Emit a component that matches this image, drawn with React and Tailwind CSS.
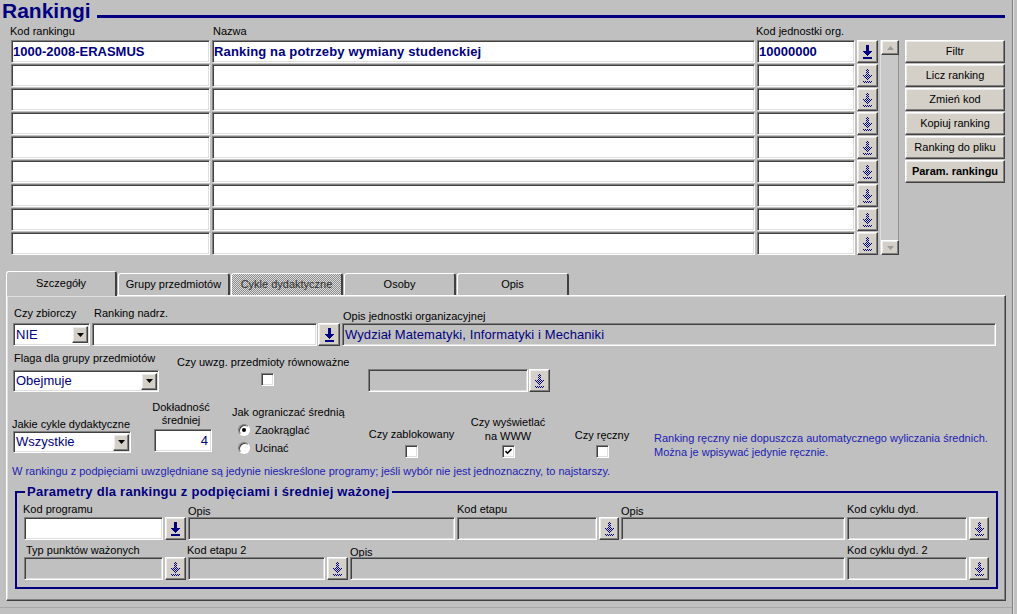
import React from "react";

const SUNKEN =
  "border border-t-[#808080] border-l-[#808080] border-b-white border-r-white shadow-[inset_1px_1px_0_#404040,inset_-1px_-1px_0_#dfdfdf]";
const RAISED =
  "bg-[#d4d0c8] border border-t-white border-l-white border-b-[#404040] border-r-[#404040] shadow-[inset_-1px_-1px_0_#808080,inset_1px_1px_0_#ececec]";

function Field({ className = "", white = false, children }) {
  return (
    <div
      className={`${SUNKEN} ${white ? "bg-white" : "bg-[#c0c0c0]"} h-[23px] flex items-center overflow-hidden whitespace-nowrap ${className}`}
    >
      {children}
    </div>
  );
}

function ArrowIcon({ enabled }) {
  const fill = enabled ? "#000080" : "url(#dith)";
  return (
    <svg width="9" height="14" viewBox="0 0 9 14" shapeRendering="crispEdges">
      <rect x="3" y="0" width="3" height="6" fill={fill} />
      <polygon points="0,6 9,6 4.5,11" fill={fill} />
      <rect x="0" y="12" width="9" height="2" fill={fill} />
    </svg>
  );
}

function LovBtn({ enabled = false, className = "" }) {
  return (
    <div className={`${RAISED} h-[23px] flex items-center justify-center shrink-0 ${className}`}>
      <ArrowIcon enabled={enabled} />
    </div>
  );
}

function Combo({ className = "", text }) {
  return (
    <div className={`${SUNKEN} bg-white flex items-center ${className}`}>
      <span className="flex-1 pl-[2px] text-[13px] text-[#000080] whitespace-nowrap">{text}</span>
      <div className={`${RAISED} w-[16px] h-[17px] mr-[1px] flex items-center justify-center`}>
        <svg width="7" height="4" viewBox="0 0 7 4">
          <polygon points="0,0 7,0 3.5,4" fill="#000" />
        </svg>
      </div>
    </div>
  );
}

function Check({ checked = false }) {
  return (
    <div className={`${SUNKEN} bg-white w-[13px] h-[13px] flex items-center justify-center`}>
      {checked && (
        <svg width="7" height="7" viewBox="0 0 7 7">
          <polyline points="0.5,3 2.5,5.2 6.5,1" fill="none" stroke="#000" strokeWidth="1.6" />
        </svg>
      )}
    </div>
  );
}

function Radio({ on = false }) {
  return (
    <div className="w-[12px] h-[12px] rounded-full bg-white border border-t-[#808080] border-l-[#808080] border-b-white border-r-white shadow-[inset_1px_1px_0_#404040] flex items-center justify-center">
      {on && <div className="w-[4px] h-[4px] rounded-full bg-black" />}
    </div>
  );
}

function Label({ className = "", children }) {
  return <div className={`leading-[14px] whitespace-nowrap ${className}`}>{children}</div>;
}

const rows = Array.from({ length: 9 }, (_, i) => i);
const sideButtons = ["Filtr", "Licz ranking", "Zmień kod", "Kopiuj ranking", "Ranking do pliku"];

export default function App() {
  return (
    <div className="w-[1017px] h-[614px] bg-[#c0c0c0] flex overflow-hidden font-['Liberation_Sans',Arial,sans-serif] text-[11px] text-black">
      <svg className="absolute w-0 h-0">
        <defs>
          <pattern id="dith" width="2" height="2" patternUnits="userSpaceOnUse">
            <rect x="0" y="0" width="1" height="1" fill="#000080" />
            <rect x="1" y="1" width="1" height="1" fill="#000080" />
          </pattern>
        </defs>
      </svg>

      <div className="w-[1012px] flex flex-col">
        {/* Title */}
        <div className="h-[24px] flex items-start pl-[2px]">
          <span className="text-[21px] leading-[22px] font-bold text-[#000080]">Rankingi</span>
          <div className="flex-1 h-[3px] bg-[#000080] mt-[15px] ml-[6px] mr-[7px]" />
        </div>

        {/* Table block */}
        <div className="flex pl-[11px]">
          <div className="flex flex-col">
            <div className="flex gap-[2px] h-[14px]">
              <Label className="w-[199px] ml-[-1px]">Kod rankingu</Label>
              <Label className="w-[543px] pl-[2px]">Nazwa</Label>
              <Label className="w-[98px]">Kod jednostki org.</Label>
            </div>
            <div className="flex flex-col gap-[1px] mt-[2px]">
              {rows.map((i) => (
                <div key={i} className="flex gap-[2px]">
                  <Field white className="w-[199px] pl-[1px] text-[13px] font-bold text-[#000080]">
                    {i === 0 ? "1000-2008-ERASMUS" : ""}
                  </Field>
                  <Field white className="w-[543px] pl-[1px] text-[13px] font-bold text-[#000080] tracking-[0.15px]">
                    {i === 0 ? "Ranking na potrzeby wymiany studenckiej" : ""}
                  </Field>
                  <Field white className="w-[98px] pl-[1px] text-[13px] font-bold text-[#000080]">
                    {i === 0 ? "10000000" : ""}
                  </Field>
                  <LovBtn enabled={i === 0} className="w-[21px]" />
                </div>
              ))}
            </div>
          </div>

          {/* scrollbar */}
          <div className="ml-[2px] mt-[16px] w-[19px] h-[215px] flex flex-col border-l border-[#dfdfdf] bg-[#c8c8c8]">
            <div className={`${RAISED} h-[15px] flex items-center justify-center`}>
              <svg width="7" height="4" viewBox="0 0 7 4">
                <polygon points="0,4 7,4 3.5,0" fill="#9a9a9a" />
              </svg>
            </div>
            <div className="flex-1 border-r border-[#909090]" />
            <div className={`${RAISED} h-[15px] flex items-center justify-center`}>
              <svg width="7" height="4" viewBox="0 0 7 4">
                <polygon points="0,0 7,0 3.5,4" fill="#9a9a9a" />
              </svg>
            </div>
          </div>

          {/* side buttons */}
          <div className="ml-[6px] mt-[16px] flex flex-col gap-[1px]">
            {sideButtons.map((b) => (
              <div key={b} className={`${RAISED} w-[100px] h-[23px] flex items-center justify-center`}>
                {b}
              </div>
            ))}
            <div className={`${RAISED} w-[100px] h-[23px] flex items-center justify-center font-bold`}>
              Param. rankingu
            </div>
          </div>
        </div>

        {/* Tabs */}
        <div className="mt-[16px] ml-[6px] h-[24px] flex items-end gap-[1px]">
          <div className="relative z-10 w-[111px] h-[25px] mb-[-1px] bg-[#c0c0c0] border-t border-l border-white border-r-2 border-r-[#404040] rounded-t-[3px] flex items-center justify-center pb-[2px]">
            Szczegóły
          </div>
          <div className="w-[112px] h-[22px] bg-[#c0c0c0] border-t border-l border-white border-r-2 border-r-[#404040] rounded-t-[3px] flex items-center justify-center">
            Grupy przedmiotów
          </div>
          <div className="w-[112px] h-[22px] bg-[repeating-conic-gradient(#8c8c8c_0%_25%,#dcdcdc_0%_50%)] bg-[length:2px_2px] border-t border-l border-white border-r-2 border-r-[#404040] rounded-t-[3px] flex items-center justify-center text-[#303030]">
            Cykle dydaktyczne
          </div>
          <div className="w-[112px] h-[22px] bg-[#c0c0c0] border-t border-l border-white border-r-2 border-r-[#404040] rounded-t-[3px] flex items-center justify-center">
            Osoby
          </div>
          <div className="w-[112px] h-[22px] bg-[#c0c0c0] border-t border-l border-white border-r-2 border-r-[#404040] rounded-t-[3px] flex items-center justify-center">
            Opis
          </div>
        </div>

        {/* Panel */}
        <div className="ml-[6px] w-[1000px] h-[306px] border border-t-white border-l-white border-b-[#404040] border-r-[#404040] shadow-[inset_-1px_-1px_0_#808080,inset_1px_1px_0_#dfdfdf] flex flex-col pl-[6px]">
          {/* Row 1 */}
          <div className="mt-[10px] flex items-end">
            <div className="flex flex-col">
              <Label className="pl-[1px] mb-[3px]">Czy zbiorczy</Label>
              <Combo className="w-[77px] h-[23px]" text="NIE" />
            </div>
            <div className="flex flex-col ml-[2px]">
              <Label className="pl-[2px] mb-[3px]">Ranking nadrz.</Label>
              <Field white className="w-[225px]" />
            </div>
            <LovBtn enabled className="w-[22px] ml-[1px]" />
            <div className="flex flex-col ml-[2px]">
              <Label className="pl-[1px]">Opis jednostki organizacyjnej</Label>
              <Field className="w-[654px] pl-[2px] text-[13px] text-[#000080] tracking-[0.1px]">
                Wydział Matematyki, Informatyki i Mechaniki
              </Field>
            </div>
          </div>

          {/* Row 2 */}
          <div className="mt-[5px] flex items-start">
            <div className="flex flex-col w-[146px]">
              <Label className="pl-[1px]">Flaga dla grupy przedmiotów</Label>
              <Combo className="mt-[5px] h-[22px] w-[146px]" text="Obejmuje" />
            </div>
            <div className="ml-[18px] w-[180px] mt-[4px] flex flex-col items-start">
              <Label>Czy uwzg. przedmioty równoważne</Label>
              <div className="mt-[4px] ml-[84px]">
                <Check />
              </div>
            </div>
            <Field className="ml-[11px] mt-[18px] w-[160px]" />
            <LovBtn className="ml-[1px] mt-[18px] w-[21px]" />
          </div>

          {/* Row 3 */}
          <div className="mt-[8px] h-[60px] flex items-start">
            <div className="w-[118px] flex flex-col">
              <div className="mt-[18px] leading-[13px] whitespace-nowrap ml-[-1px]">Jakie cykle dydaktyczne</div>
              <Combo className="h-[22px] w-[118px]" text="Wszystkie" />
            </div>
            <div className="ml-[19px] w-[62px] flex flex-col">
              <div className="mt-[1px] leading-[13px] text-center">
                Dokładność
                <br />
                średniej
              </div>
              <Field white className="mt-[2px] self-end w-[58px] justify-end pr-[3px] text-[13px] text-[#000080]">
                4
              </Field>
            </div>
            <div className="ml-[20px] w-[135px] flex flex-col">
              <div className="mt-[6px] leading-[13px] whitespace-nowrap">Jak ograniczać średnią</div>
              <div className="mt-[3px] h-[16px] flex items-center pl-[6px] gap-[5px]">
                <Radio on />
                <span>Zaokrąglać</span>
              </div>
              <div className="mt-[2px] h-[16px] flex items-center pl-[6px] gap-[5px]">
                <Radio />
                <span>Ucinać</span>
              </div>
            </div>
            <div className="w-[89px] flex flex-col items-center">
              <Label className="mt-[27px]">Czy zablokowany</Label>
              <div className="mt-[4px]">
                <Check />
              </div>
            </div>
            <div className="ml-[12px] w-[80px] flex flex-col items-center">
              <div className="mt-[15px] leading-[14px] text-center whitespace-nowrap">
                Czy wyświetlać
                <br />
                na WWW
              </div>
              <div className="mt-[2px]">
                <Check checked />
              </div>
            </div>
            <div className="ml-[25px] w-[58px] flex flex-col items-center">
              <Label className="mt-[28px]">Czy ręczny</Label>
              <div className="mt-[3px]">
                <Check />
              </div>
            </div>
            <div className="ml-[23px] mt-[31px] leading-[14px] text-[#1c1cb4] whitespace-nowrap">
              Ranking ręczny nie dopuszcza automatycznego wyliczania średnich.
              <br />
              Można je wpisywać jedynie ręcznie.
            </div>
          </div>

          {/* Info line */}
          <div className="mt-[4px] ml-[-1px] leading-[14px] text-[#1c1cb4] whitespace-nowrap">
            W rankingu z podpięciami uwzględniane są jedynie nieskreślone programy; jeśli wybór nie jest jednoznaczny, to najstarszy.
          </div>

          {/* Group box */}
          <fieldset className="mt-[6px] ml-[2px] w-[983px] border-2 border-[#000080] p-0">
            <legend className="ml-[8px] px-[2px] text-[13px] leading-[16px] font-bold text-[#000080] tracking-[0.25px]">
              Parametry dla rankingu z podpięciami i średniej ważonej
            </legend>
            <div className="pl-[7px] pt-[2px] pb-[7px] flex flex-col">
              <div className="flex items-end gap-[2px]">
                <div className="flex flex-col">
                  <Label className="ml-[-1px] mb-[1px]">Kod programu</Label>
                  <Field white className="w-[139px]" />
                </div>
                <LovBtn enabled className="w-[21px]" />
                <div className="flex flex-col">
                  <Label className="mb-[-1px]">Opis</Label>
                  <Field className="w-[267px]" />
                </div>
                <div className="flex flex-col">
                  <Label className="mb-[1px]">Kod etapu</Label>
                  <Field className="w-[140px]" />
                </div>
                <LovBtn className="w-[20px]" />
                <div className="flex flex-col">
                  <Label className="mb-[-1px]">Opis</Label>
                  <Field className="w-[224px]" />
                </div>
                <div className="flex flex-col">
                  <Label className="mb-[1px]">Kod cyklu dyd.</Label>
                  <Field className="w-[120px]" />
                </div>
                <LovBtn className="w-[20px]" />
              </div>
              <div className="mt-[3px] flex items-end gap-[2px]">
                <div className="flex flex-col">
                  <Label className="pl-[2px]">Typ punktów ważonych</Label>
                  <Field className="w-[139px]" />
                </div>
                <LovBtn className="w-[21px]" />
                <div className="flex flex-col">
                  <Label className="ml-[-1px]">Kod etapu 2</Label>
                  <Field className="w-[137px]" />
                </div>
                <LovBtn className="w-[21px]" />
                <div className="flex flex-col">
                  <Label className="mb-[-2px]">Opis</Label>
                  <Field className="w-[495px]" />
                </div>
                <div className="flex flex-col">
                  <Label>Kod cyklu dyd. 2</Label>
                  <Field className="w-[120px]" />
                </div>
                <LovBtn className="w-[20px]" />
              </div>
            </div>
          </fieldset>
        </div>
        <div className="mt-[6px] h-px bg-[#a8a8a8]" />
      </div>
      <div className="w-px bg-[#808080]" />
      <div className="w-px bg-[#dfdfdf]" />
    </div>
  );
}
